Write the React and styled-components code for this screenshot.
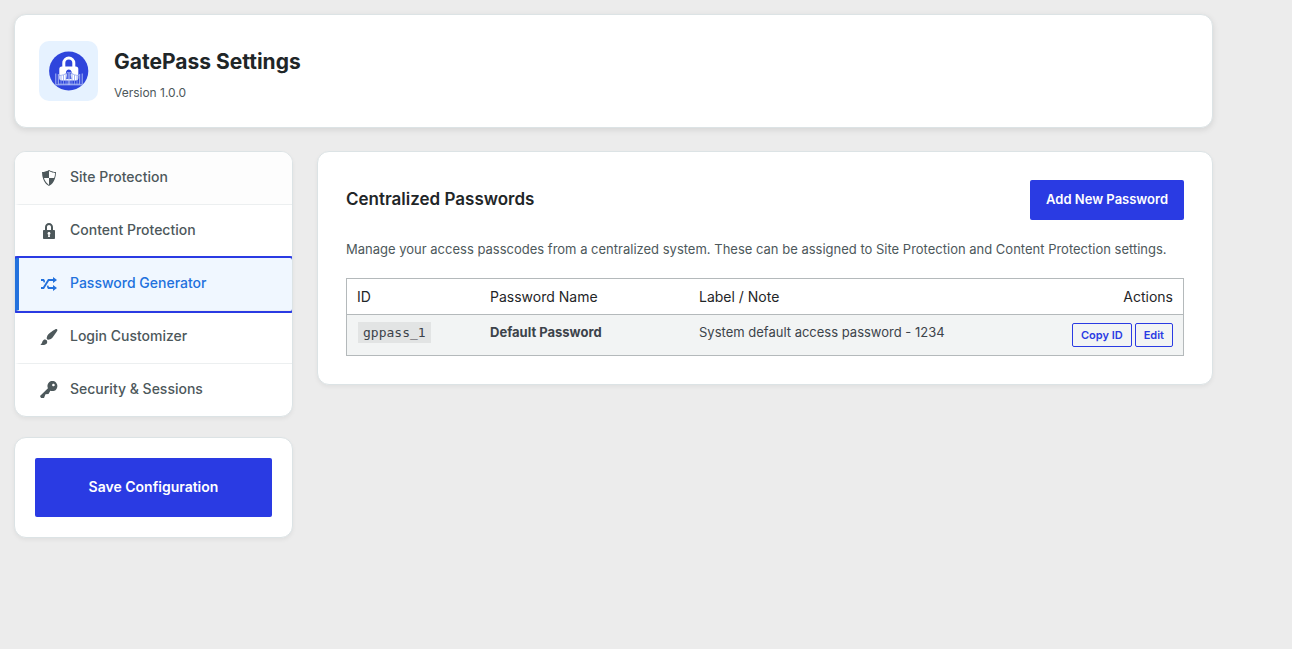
import styled, { createGlobalStyle, css } from "styled-components";

const GlobalStyle = createGlobalStyle`
  * {
    box-sizing: border-box;
  }
  body {
    margin: 0;
    background: #ececec;
    color: #3c434a;
    font-family: Inter, Roboto, "Liberation Sans", sans-serif;
    font-size: 13px;
    line-height: 20px;
  }
  button {
    font-family: inherit;
    cursor: pointer;
  }
`;

const Page = styled.div`
  max-width: 1227px;
  padding: 14px;
`;

const Card = styled.section`
  background: #fff;
  border: 1px solid #dce3e5;
  border-radius: 12px;
  box-shadow: 0 2px 4px rgba(0, 0, 0, 0.05);
`;

const Header = styled(Card).attrs({ as: "header" })`
  display: flex;
  align-items: center;
  gap: 16px;
  padding: 26px 24px;
  margin-bottom: 23px;
  box-shadow: 0 2px 6px rgba(0, 0, 0, 0.1);
`;

const LogoBox = styled.div`
  display: flex;
  align-items: center;
  justify-content: center;
  width: 59px;
  height: 60px;
  border-radius: 10px;
  background: #e6f2ff;
`;

const HeaderText = styled.div`
  display: grid;
  gap: 9px;
  padding-top: 7px;
`;

const Title = styled.h1`
  margin: 0;
  font-size: 21px;
  font-weight: 700;
  line-height: 28px;
  color: #1f2628;
`;

const Version = styled.p`
  margin: 0;
  font-size: 12px;
  line-height: 16px;
  color: #4d585b;
`;

const Columns = styled.div`
  display: grid;
  grid-template-columns: 279px 1fr;
  gap: 24px;
  align-items: start;
`;

const Sidebar = styled.aside`
  display: grid;
  gap: 20px;
`;

const Nav = styled(Card).attrs({ as: "nav" })`
  overflow: hidden;
`;

const NavItem = styled.a`
  display: flex;
  align-items: center;
  gap: 11px;
  padding: 15px 20px 17px;
  border-left: 4px solid transparent;
  border-bottom: 1px solid #eceff0;
  font-size: 14px;
  font-weight: 500;
  color: #4d585b;
  text-decoration: none;

  svg {
    margin-top: 1px;
    margin-bottom: -1px;
  }
  &:first-child {
    background: #fdfdfd;
  }
  &:last-child {
    border-bottom: 0;
  }
  ${({ $active }) =>
    $active &&
    css`
      position: relative;
      color: #2271dd;
      background: #f0f7ff;
      border-left-color: #2271dd;
      border-radius: 2px;
      box-shadow: 0 0 0 2px #2a3be3;
    `}
`;

const SaveCard = styled(Card)`
  padding: 20px;
`;

const Button = styled.button`
  border: 0;
  border-radius: 2px;
  background: #2a3be3;
  color: #fff;
  font-weight: 600;
  font-size: 13px;
  line-height: 20px;
  padding: 9px 16px 11px;
`;

const SaveButton = styled(Button)`
  width: 100%;
  height: 59px;
  font-size: 14px;
`;

const Panel = styled(Card).attrs({ as: "main" })`
  padding: 28px;
`;

const PanelHead = styled.div`
  display: flex;
  align-items: flex-start;
  justify-content: space-between;
  margin-bottom: 19px;
`;

const PanelTitle = styled.h2`
  margin: 5px 0 0;
  font-size: 17px;
  font-weight: 600;
  line-height: 28px;
  color: #1f2628;
`;

const Description = styled.p`
  margin: 0 0 19px;
  color: #4d585b;
`;

const Table = styled.table`
  width: 100%;
  table-layout: fixed;
  border-collapse: separate;
  border-spacing: 0;
  border: 1px solid #b4b9bb;
`;

const Th = styled.th`
  width: ${({ $width }) => $width || "auto"};
  padding: 8px 10px 7px;
  border-bottom: 1px solid #b4b9bb;
  text-align: ${({ $align }) => $align || "left"};
  font-size: 14px;
  font-weight: 400;
  line-height: 20px;
  color: #1f2628;
`;

const Td = styled.td`
  padding: 7px 10px 8px;
  background: #f2f4f4;
  vertical-align: top;
  text-align: ${({ $align }) => $align || "left"};
`;

const Code = styled.code`
  display: inline-block;
  margin: -1px 1px 0;
  padding: 0 5px;
  background: #e2e4e4;
  font-family: "DejaVu Sans Mono", monospace;
  font-size: 13px;
  line-height: 21px;
`;

const Actions = styled.div`
  display: flex;
  justify-content: flex-end;
  gap: 3px;
  padding-top: 1px;
`;

const SmallButton = styled.button`
  padding: 0 8px;
  border: 1px solid #2a3be3;
  border-radius: 2px;
  background: transparent;
  color: #2a3be3;
  font-size: 11px;
  font-weight: 600;
  line-height: 22px;
`;

const icons = {
  shield:
    "M10 2s3 2 7 2c0 11-7 14-7 14S3 15 3 4c4 0 7-2 7-2zm0 8h5s1-1 1-5c0 0-5-1-6-2v7H5c1 4 5 7 5 7v-7z",
  lock: "M14 9h1c.55 0 1 .45 1 1v7c0 .55-.45 1-1 1H5c-.55 0-1-.45-1-1v-7c0-.55.45-1 1-1h1V6c0-2.21 1.79-4 4-4s4 1.79 4 4v3zm-2 0V6c0-1.1-.9-2-2-2s-2 .9-2 2v3h4zm-1 7l-.36-2.15c.51-.24.86-.75.86-1.35 0-.83-.67-1.5-1.5-1.5s-1.5.67-1.5 1.5c0 .6.35 1.11.86 1.35L9 16h2z",
  shuffle:
    "M18 6.01L14 9V7h-4l-5 8H2v-2h2l5-8h5V3zM2 5h3l1.15 2.17-1.12 1.8L4 7H2V5zm16 9.01L14 17v-2H9l-1.15-2.17 1.12-1.8L10 13h4v-2z",
  brush:
    "M18.33 3.57s.27-.8-.31-1.36c-.53-.52-1.22-.24-1.22-.24-.61.3-5.76 3.47-7.67 5.57-.86.96-2.06 3.79-1.09 4.82.92.98 3.96-.17 4.79-1 2.06-2.06 5.21-7.17 5.5-7.79zM1.4 17.65c2.37-1.56 1.46-3.41 3.23-4.64.93-.65 2.22-.62 3.08.29.63.67.8 2.57-.16 3.46-1.57 1.45-4 1.55-6.15.89z",
  key: "M16.95 2.58c1.96 1.95 1.96 5.12 0 7.07-1.51 1.51-3.75 1.84-5.59 1.01l-1.87 3.31-2.99.31L5 18H2l-1-2 7.95-7.69c-.92-1.87-.62-4.18.93-5.73 1.95-1.96 5.12-1.96 7.07 0zm-2.51 3.79c.74 0 1.33-.6 1.33-1.34 0-.73-.59-1.33-1.33-1.33-.73 0-1.33.6-1.33 1.33 0 .74.6 1.34 1.33 1.34z",
};

const navItems = [
  { id: "site", label: "Site Protection", icon: "shield" },
  { id: "content", label: "Content Protection", icon: "lock" },
  { id: "generator", label: "Password Generator", icon: "shuffle" },
  { id: "login", label: "Login Customizer", icon: "brush" },
  { id: "security", label: "Security & Sessions", icon: "key" },
];

const passwords = [
  {
    id: "gppass_1",
    name: "Default Password",
    note: "System default access password - 1234",
  },
];

function Icon({ name }) {
  return (
    <svg width="20" height="20" viewBox="0 0 20 20" fill="currentColor" aria-hidden="true">
      <path d={icons[name]} />
    </svg>
  );
}

function Logo() {
  return (
    <svg width="40" height="40" viewBox="0 0 40 40" fill="none" aria-hidden="true">
      <circle cx="19.7" cy="20" r="19.6" fill="#2f45dc" />
      <path d="M14.8 17v-5a5 5 0 0 1 10 0v5" stroke="#fff" strokeWidth="3" />
      <rect x="10.3" y="15.5" width="19" height="14" rx="2.5" fill="#fff" />
      {/* keyhole */}
      <path d="M19.8 18.5a3 3 0 0 1 1.8 5.3l1 4.2H17l1-4.2a3 3 0 0 1 1.8-5.300z" fill="#2f45dc" />
      {/* gate doors */}
      <path
        d="M9.5 24.5c4 0 7-1 9.5-3.5M30.5 24.5c-4 0-7-1-9.5-3.5M9.5 33h21M12 24.5v9M14.5 24v9.5M17 22.5v11M23 22.5v11M25.5 24v9.5M28 24.5v9"
        stroke="#8fa3ef"
        strokeWidth="0.8"
      />
      <path
        d="M6.8 22.5v11.3M9.3 23v10.5M19.2 21v13M20.8 21v13M30.7 23v10.5M33.2 22.5v11.3M6.8 33.8h26.4"
        stroke="#b9c5f6"
        strokeWidth="0.9"
      />
    </svg>
  );
}

function App() {
  return (
    <>
      <GlobalStyle />
      <Page>
        <Header>
          <LogoBox>
            <Logo />
          </LogoBox>
          <HeaderText>
            <Title>GatePass Settings</Title>
            <Version>Version 1.0.0</Version>
          </HeaderText>
        </Header>
        <Columns>
          <Sidebar>
            <Nav>
              {navItems.map(({ id, label, icon }) => (
                <NavItem key={id} href={`#${id}`} $active={id === "generator"}>
                  <Icon name={icon} />
                  {label}
                </NavItem>
              ))}
            </Nav>
            <SaveCard>
              <SaveButton type="submit">Save Configuration</SaveButton>
            </SaveCard>
          </Sidebar>
          <Panel>
            <PanelHead>
              <PanelTitle>Centralized Passwords</PanelTitle>
              <Button type="button">Add New Password</Button>
            </PanelHead>
            <Description>
              Manage your access passcodes from a centralized system. These can be assigned to Site
              Protection and Content Protection settings.
            </Description>
            <Table>
              <thead>
                <tr>
                  <Th $width="133px">ID</Th>
                  <Th $width="25%">Password Name</Th>
                  <Th>Label / Note</Th>
                  <Th $width="20%" $align="right">
                    Actions
                  </Th>
                </tr>
              </thead>
              <tbody>
                {passwords.map(({ id, name, note }) => (
                  <tr key={id}>
                    <Td>
                      <Code>{id}</Code>
                    </Td>
                    <Td>
                      <strong>{name}</strong>
                    </Td>
                    <Td>{note}</Td>
                    <Td $align="right">
                      <Actions>
                        <SmallButton type="button">Copy ID</SmallButton>
                        <SmallButton type="button">Edit</SmallButton>
                      </Actions>
                    </Td>
                  </tr>
                ))}
              </tbody>
            </Table>
          </Panel>
        </Columns>
      </Page>
    </>
  );
}

export default App;
